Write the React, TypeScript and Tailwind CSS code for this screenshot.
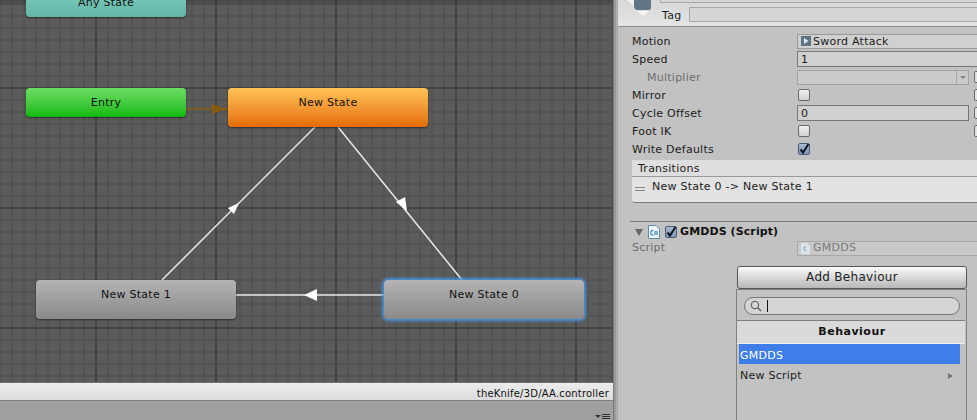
const F = "font-['DejaVu_Sans',sans-serif]";

function Node({ label, cls, selected }: { label: string; cls: string; selected?: boolean }) {
  return (
    <div className={`absolute flex justify-center rounded-[4px] pt-[8px] text-[11px] leading-[14px] tracking-[0.25px] text-[#111] ${cls} ${selected ? "shadow-[0_0_3px_2px_rgba(70,150,225,0.9)]" : "shadow-[0_1px_2px_rgba(0,0,0,0.5)]"}`}>
      {label}
    </div>
  );
}

function Row({ label, sub, dim, children }: { label: string; sub?: boolean; dim?: boolean; children?: React.ReactNode }) {
  return (
    <div className="flex h-[18px] items-center">
      <div className={`w-[165px] shrink-0 pt-[2px] text-[11px] ${sub ? "pl-[15px]" : ""} ${dim ? "text-[#6e6e6e]" : "text-[#1c1c1c]"}`}>{label}</div>
      {children}
    </div>
  );
}

function Box() {
  return <div className="ml-[1px] h-[12px] w-[12px] rounded-[2px] border border-[#6a6a6a] bg-gradient-to-b from-[#f0f0f0] to-[#d0d0d0]" />;
}

function Check() {
  return (
    <div className="ml-[1px] flex h-[12px] w-[12px] items-center justify-center rounded-[2px] border border-[#4c5c74] bg-gradient-to-b from-[#a8b8d0] to-[#7f96b8]">
      <svg width="12" height="12" viewBox="0 0 12 12" className="shrink-0">
        <path d="M2.5 6.5 L5 9.5 L10.5 1" fill="none" stroke="#0d1420" strokeWidth="2" />
      </svg>
    </div>
  );
}

function SideBox() {
  return <div className="ml-[5px] h-[12px] w-[12px] shrink-0 rounded-[2px] border border-[#6a6a6a] bg-[#e4e4e4]" />;
}

export default function App() {
  return (
    <div className={`flex h-[420px] w-[977px] overflow-hidden bg-[#c2c2c2] ${F}`}>
      <div className="flex w-[613px] shrink-0 flex-col">
        <div className="relative h-[382px] overflow-hidden bg-[#5b5b5b] bg-[linear-gradient(to_right,#444444_2px,transparent_2px),linear-gradient(to_bottom,#444444_2px,transparent_2px),linear-gradient(to_right,#535353_2px,transparent_2px),linear-gradient(to_bottom,#535353_2px,transparent_2px)] bg-[size:120px_120px,120px_120px,12px_12px,12px_12px] bg-[position:95px_0,0_87px,-1px_0,0_3px]">
          <div className="absolute inset-x-0 top-0 h-[6px] bg-gradient-to-b from-[rgba(0,0,0,0.22)] to-transparent" />
          <svg className="absolute inset-0" width="613" height="382">
            <path d="M186 109 H228" stroke="#8a5a10" strokeWidth="1.5" />
            <polygon points="212,104 212,114 226,109" fill="#8a5a10" />
            <g stroke="#e8e8e8" strokeWidth="1.5">
              <path d="M338 127 L462 280" />
              <path d="M162 280 L315 127" />
              <path d="M236 295 H384" />
            </g>
            <g fill="#fff">
              <polygon points="407,211 396,202 405,197" />
              <polygon points="239,203 228,208 234,214" />
              <polygon points="304,295 317,289 317,301" />
            </g>
          </svg>
          <div className="absolute left-[26px] top-[-27px] flex h-[44px] w-[160px] justify-center rounded-[4px] bg-gradient-to-b from-[#8fe0d0] to-[#62b4a4] pt-[23px] text-[11px] leading-[14px] tracking-[0.25px] text-[#111] shadow-[0_1px_2px_rgba(0,0,0,0.5)]">Any State</div>
          <Node label="Entry" cls="left-[26px] top-[88px] h-[29px] w-[160px] bg-gradient-to-b from-[#6ade62] to-[#00b800]" />
          <Node label="New State" cls="left-[228px] top-[88px] h-[39px] w-[200px] bg-gradient-to-b from-[#ffc454] to-[#e46c00]" />
          <Node label="New State 1" cls="left-[36px] top-[280px] h-[39px] w-[200px] bg-gradient-to-b from-[#b4b4b4] to-[#8a8a8a]" />
          <Node label="New State 0" selected cls="left-[384px] top-[280px] h-[39px] w-[200px] bg-gradient-to-b from-[#b4b4b4] to-[#8a8a8a]" />
        </div>
        <div className="flex h-[18px] items-center justify-end border-t border-[#707070] bg-gradient-to-b from-[#ececec] to-[#dcdcdc] pr-[4px] pt-[3px] text-[10px] tracking-[0.2px] text-[#111]">
          theKnife/3D/AA.controller
        </div>
        <div className="relative flex-1 border-t border-[#808080] bg-[#a0a0a0]">
          <div className="absolute right-[3px] top-[13px] flex items-center gap-[1px]">
            <div className="h-0 w-0 border-x-[3px] border-t-[3px] border-x-transparent border-t-[#333]" />
            <div className="flex flex-col gap-[1px]">
              <div className="h-[1px] w-[8px] bg-[#333]" />
              <div className="h-[1px] w-[8px] bg-[#333]" />
              <div className="h-[1px] w-[8px] bg-[#333]" />
            </div>
          </div>
        </div>
      </div>
      <div className="w-[3px] shrink-0 border-l border-[#7a7a7a] bg-[#9a9a9a]" />
      <div className="w-[1px] shrink-0 bg-[#b0b0b0]" />

      <div className="relative min-w-0 flex-1 overflow-hidden border-l border-[#a8a8a8] tracking-[0.25px]">
        {/* header */}
        <div className="relative h-[27px] border-b border-[#8c8c8c] bg-gradient-to-b from-[#d8d8d8] to-[#e4e4e4]">
          <div className="absolute left-[42px] top-[-1px] h-[4px] w-[330px] border border-[#a8a8a8] bg-[#d6d6d6]" />
          <div className="absolute left-[71px] top-[7px] h-[15px] w-[300px] border border-[#a8a8a8] bg-[#d6d6d6]" />
          <div className="absolute left-[44px] top-[9px] text-[11px] leading-[14px] text-[#1c1c1c]">Tag</div>
          <svg className="absolute left-[4px] top-0" width="34" height="18" viewBox="0 0 34 18">
            <path d="M5 0 L13 7 V0 Z" fill="#f2f2f2" />
            <path d="M29 0 H12 V6 Q12 10 16 10 H27 Q29 10 29 7 Z" fill="#607585" />
            <path d="M15 11 H27 L21 16 Z" fill="#f6f6f6" />
          </svg>
        </div>

        {/* fields */}
        <div className="pl-[14px] pt-[5px]">
          <Row label="Motion">
            <div className="flex h-[15px] w-[200px] shrink-0 items-center gap-[2px] border border-[#9a9a9a] bg-[#d0d0d0] pl-[3px] text-[11px] text-[#1c1c1c]">
              <svg width="10" height="10" viewBox="0 0 10 10" className="shrink-0">
                <rect width="10" height="10" fill="#5e7484" />
                <path d="M3 2 L7.5 5 L3 8 Z" fill="#e8e8e8" />
              </svg>
              <span className="pt-[2px]">Sword Attack</span>
            </div>
          </Row>
          <Row label="Speed">
            <div className="flex h-[16px] w-[200px] shrink-0 items-center border border-[#777] bg-[#d0d0d0] pl-[3px] pt-[2px] text-[11px] text-[#1c1c1c]">1</div>
          </Row>
          <Row label="Multiplier" sub dim>
            <div className="relative h-[15px] w-[172px] shrink-0 border border-[#a4a4a4] bg-[#cacaca]">
              <div className="absolute right-0 top-0 flex h-full w-[12px] items-center justify-center border-l border-[#a8a8a8]">
                <div className="h-0 w-0 border-x-[3px] border-t-[3px] border-x-transparent border-t-[#888]" />
              </div>
            </div>
            <SideBox />
          </Row>
          <Row label="Mirror">
            <div className="w-[172px] shrink-0"><Box /></div>
            <SideBox />
          </Row>
          <Row label="Cycle Offset">
            <div className="flex h-[16px] w-[172px] shrink-0 items-center border border-[#777] bg-[#d0d0d0] pl-[3px] pt-[2px] text-[11px] text-[#1c1c1c]">0</div>
            <SideBox />
          </Row>
          <Row label="Foot IK">
            <div className="w-[172px] shrink-0"><Box /></div>
            <SideBox />
          </Row>
          <Row label="Write Defaults"><Check /></Row>
        </div>

        {/* transitions */}
        <div className="ml-[14px] mt-[2px] h-[43px] w-[400px] rounded-[3px] border-b border-[#7a7a7a] bg-[#e2e2e2] text-[11px] text-[#1c1c1c]">
          <div className="h-[17px] border-b border-[#9a9a9a] bg-[#dedede] pl-[6px] pt-[1px] leading-[16px]">Transitions</div>
          <div className="flex items-center pl-[3px] pt-[3px] leading-[14px]">
            <div className="mr-[7px] mt-[3px] flex w-[10px] flex-col gap-[2px]">
              <div className="h-[1px] bg-[#8a8a8a]" />
              <div className="h-[1px] bg-[#8a8a8a]" />
            </div>
            New State 0 -&gt; New State 1
          </div>
        </div>

        {/* component */}
        <div className="ml-[12px] mt-[18px] flex h-[19px] items-center border-t border-[#7a7a7a] pl-[5px] pt-[2px]">
          <div className="h-0 w-0 border-x-[4px] border-t-[7px] border-x-transparent border-t-[#666]" />
          <svg width="12" height="14" viewBox="0 0 12 14" className="ml-[5px] shrink-0">
            <path d="M0.5 0.5 H8 L11.5 4 V13.5 H0.5 Z" fill="#f4f8fb" stroke="#5c8cb0" />
            <path d="M5.5 5.5 A2.3 2.3 0 1 0 5.5 10" fill="none" stroke="#2a80b8" strokeWidth="1.2" />
            <path d="M7 6 V10 M9 6 V10 M6 7 H10 M6 9 H10" stroke="#2a80b8" strokeWidth="0.7" />
          </svg>
          <div className="ml-[5px]"><div className="-ml-[1px]"><Check /></div></div>
          <span className="ml-[3px] text-[11px] font-bold tracking-[0.1px] text-[#111]">GMDDS (Script)</span>
        </div>
        <div className="flex h-[16px] items-center pl-[14px]">
          <div className="w-[165px] shrink-0 pt-[1px] text-[11px] text-[#6e6e6e]">Script</div>
          <div className="flex h-[15px] w-[200px] shrink-0 items-center gap-[3px] border border-[#a8a8a8] bg-[#c8c8c8] pl-[3px] pt-[1px] text-[11px] text-[#7a7a7a]">
            <svg width="9" height="11" viewBox="0 0 9 11" className="shrink-0">
              <path d="M0 0 H6 L9 3 V11 H0 Z" fill="#dce4ea" />
              <path d="M5 3.5 A2 2 0 1 0 5 7.5" fill="none" stroke="#8aaec8" strokeWidth="1.2" />
            </svg>
            GMDDS
          </div>
        </div>

        {/* add behaviour */}
        <div className="ml-[119px] mt-[10px] w-[230px]">
          <div className="flex h-[23px] items-center justify-center rounded-[3px] border border-[#555] bg-gradient-to-b from-[#fafafa] to-[#b8b8b8] pb-[2px] text-[12px] tracking-[0.3px] text-[#222]">Add Behaviour</div>
          <div className="-ml-[1px] h-[140px] border-x border-t border-[#808080]">
            <div className="flex h-[30px] items-start pl-[7px] pt-[7px]">
              <div className="flex h-[18px] w-[216px] items-center rounded-full border border-[#777] bg-[#d4d4d4] pl-[5px]">
                <svg width="12" height="12" viewBox="0 0 12 12" className="shrink-0">
                  <circle cx="5" cy="5" r="3.8" fill="none" stroke="#555" />
                  <path d="M8 8 L11 11" stroke="#555" strokeWidth="1.3" />
                </svg>
                <div className="ml-[5px] h-[12px] w-[1px] bg-[#111]" />
              </div>
            </div>
            <div className="flex h-[24px] w-[228px] items-center justify-center border-y border-t-[#808080] border-b-[#eee] bg-[#dadada] pl-[2px] text-[11px] font-bold tracking-[0.5px] text-[#111]">Behaviour</div>
            <div className="ml-[2px] flex h-[20px] w-[221px] items-center bg-[#3f7de8] pl-[1px] pt-[4px] text-[11px] text-white">GMDDS</div>
            <div className="ml-[2px] flex h-[20px] w-[221px] items-center justify-between pl-[1px] pr-[7px] pt-[4px] text-[11px] text-[#1c1c1c]">
              New Script
              <div className="h-0 w-0 border-y-[3px] border-l-[5px] border-y-transparent border-l-[#777]" />
            </div>
          </div>
        </div>
      </div>
    </div>
  );
}
